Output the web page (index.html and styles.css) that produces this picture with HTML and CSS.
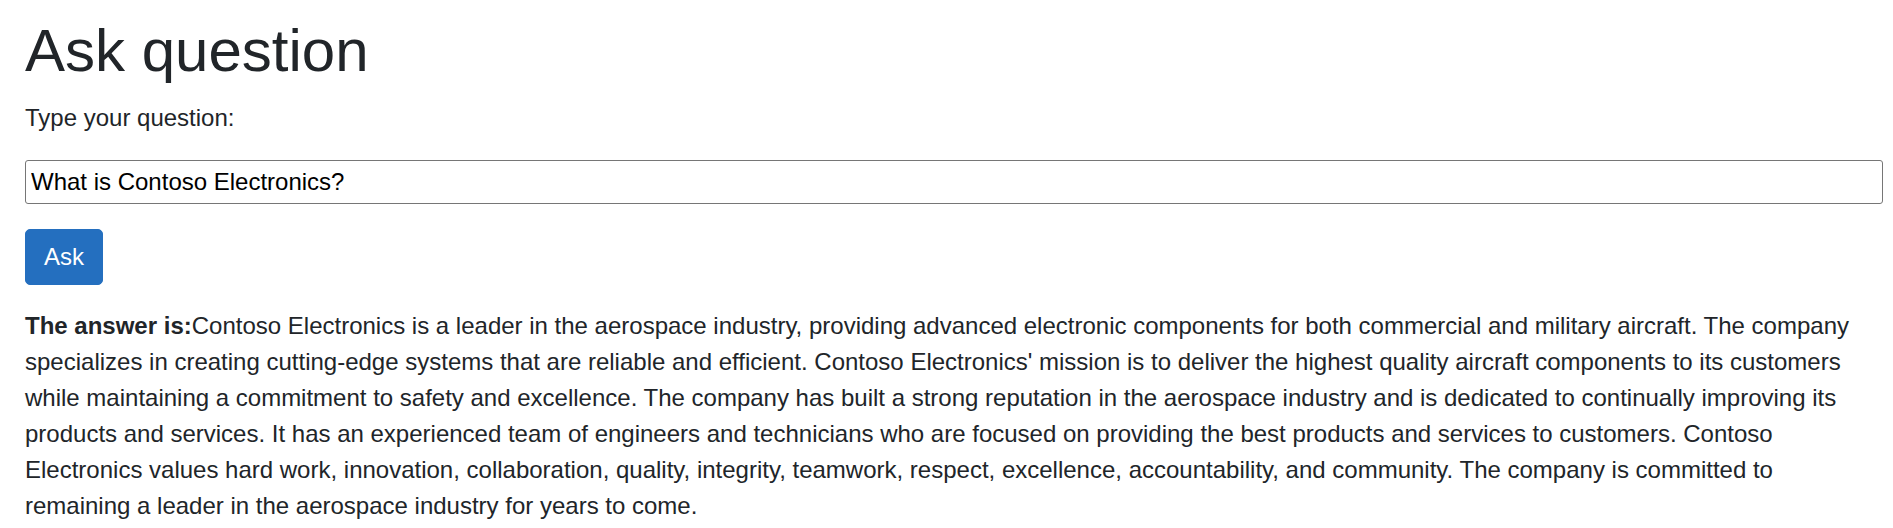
FILE: index.html
```html
<!DOCTYPE html>
<html lang="en">
<head>
  <meta charset="UTF-8" />
  <meta name="viewport" content="width=device-width, initial-scale=1.0">
  <title>Ask question</title>
  <link rel="stylesheet" href="styles.css">
</head>
<body>
  <main class="page">
    <h1>Ask question</h1>
    <form class="askForm" onsubmit="return false;">
      <label for="question" class="askLabel">Type your question:</label>
      <input id="question" class="askInput" type="text" value="What is Contoso Electronics?">
      <button class="askBtn" type="submit">Ask</button>
    </form>
    <p class="answer"><strong>The answer is:</strong>Contoso Electronics is a leader in the aerospace industry, providing advanced electronic components for both commercial and military aircraft. The company specializes in creating cutting-edge systems that are reliable and efficient. Contoso Electronics' mission is to deliver the highest quality aircraft components to its customers while maintaining a commitment to safety and excellence. The company has built a strong reputation in the aerospace industry and is dedicated to continually improving its products and services. It has an experienced team of engineers and technicians who are focused on providing the best products and services to customers. Contoso Electronics values hard work, innovation, collaboration, quality, integrity, teamwork, respect, excellence, accountability, and community. The company is committed to remaining a leader in the aerospace industry for years to come.</p>
  </main>
</body>
</html>
```

FILE: styles.css
```css
* { box-sizing: border-box; }
body {
  margin: 0;
  font-family: "Liberation Sans", Arial, sans-serif;
  font-size: 24px;
  line-height: 1.5;
  color: #212529;
  background: #fff;
}
.page {
  padding: 15px 10px 0 25px;
}
h1 {
  font-size: 60px;
  font-weight: 400;
  line-height: 1.2;
  margin: 0 0 13px;
}
.askForm {
  display: flex;
  flex-direction: column;
  align-items: flex-start;
}
.askLabel {
  margin-bottom: 24px;
}
.askInput {
  width: 100%;
  font-family: inherit;
  font-size: 24px;
  line-height: normal;
  color: #000;
  padding: 7px 5px;
  height: 44px;
  border: 1px solid #767676;
  border-radius: 3px;
  margin: 0 0 25px;
}
.askBtn {
  font-family: inherit;
  font-size: 24px;
  line-height: 36px;
  padding: 9px 18px;
  color: #fff;
  background: #246fbf;
  border: 1px solid #246fbf;
  border-radius: 5px;
  cursor: pointer;
}
.answer {
  margin: 23px 0 0;
}
```
